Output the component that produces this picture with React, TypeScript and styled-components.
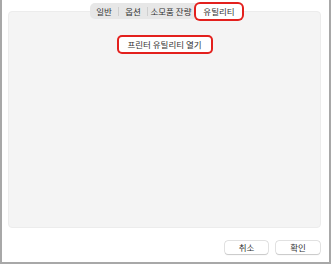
import styled, { createGlobalStyle } from "styled-components";

const Global = createGlobalStyle`
  html, body { margin: 0; padding: 0; background: #fff; }
  body { font-family: "Noto Sans CJK KR", "Noto Sans", sans-serif; }
`;

const Window = styled.div`
  box-sizing: border-box;
  width: 331px;
  height: 264px;
  border: 2px solid #a8a8a8;
  border-top: none;
  padding: 11px 8px 0 6px;
  display: flex;
  flex-direction: column;
  background: #fff;
`;

const Panel = styled.div`
  box-sizing: border-box;
  height: 217px;
  background: #f4f4f4;
  border: 1px solid #ececec;
  border-radius: 4px;
  display: flex;
  flex-direction: column;
  align-items: center;
`;

const TabBar = styled.div`
  margin-top: -9px;
  margin-left: 3px;
  display: flex;
  align-items: center;
  height: 16px;
  background: #e7e7e7;
  border-radius: 5px;
`;

const Tab = styled.div<{ $active?: boolean; $w: number }>`
  box-sizing: border-box;
  width: ${(p) => p.$w}px;
  height: ${(p) => (p.$active ? "15px" : "16px")};
  display: flex;
  align-items: center;
  justify-content: center;
  font-size: 8.5px;
  color: #333;
  background: ${(p) => (p.$active ? "#fff" : "transparent")};
  border-radius: 4px;
  box-shadow: ${(p) => (p.$active ? "0 0 0 2px #e3201d" : "none")};
  margin-left: ${(p) => (p.$active ? "2px" : "0")};
`;

const Sep = styled.span`
  width: 1px;
  height: 9px;
  background: #cfcfcf;
`;

const Content = styled.div`
  margin-top: 10px;
`;

const Button = styled.button<{ $marked?: boolean; $w: number }>`
  box-sizing: border-box;
  width: ${(p) => p.$w}px;
  height: ${(p) => (p.$marked ? "15px" : "13px")};
  padding: 0;
  font-family: "Noto Sans CJK KR", "Noto Sans", sans-serif;
  font-size: 8.5px;
  line-height: 1;
  color: #333;
  background: #fff;
  border: none;
  border-radius: 3px;
  box-shadow: ${(p) =>
    p.$marked
      ? "0 0 0 2px #e3201d, 0 0.5px 1px rgba(0,0,0,0.25)"
      : "0 0 0 0.5px #c8c8c8, 0 0.5px 1px rgba(0,0,0,0.2)"};
`;

const Footer = styled.div`
  display: flex;
  justify-content: flex-end;
  gap: 8px;
  margin-top: 13px;
  padding-right: 1px;
`;

export default function App() {
  return (
    <>
      <Global />
      <Window>
        <Panel>
          <TabBar>
            <Tab $w={28}>일반</Tab>
            <Sep />
            <Tab $w={28}>옵션</Tab>
            <Sep />
            <Tab $w={46}>소모품 잔량</Tab>
            <Tab $active $w={46}>유틸리티</Tab>
          </TabBar>
          <Content>
            <Button $marked $w={92}>프린터 유틸리티 열기</Button>
          </Content>
        </Panel>
        <Footer>
          <Button $w={43}>취소</Button>
          <Button $w={44}>확인</Button>
        </Footer>
      </Window>
    </>
  );
}
